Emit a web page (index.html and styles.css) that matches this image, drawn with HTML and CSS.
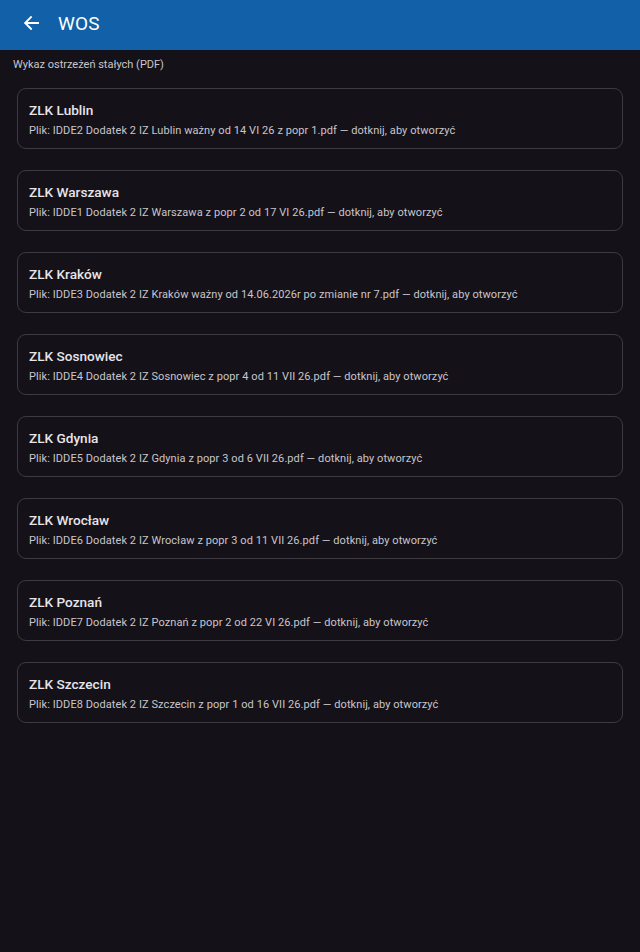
FILE: index.html
```html
<!DOCTYPE html>
<html lang="pl">
<head>
<meta charset="utf-8">
<title>WOS</title>
<link rel="stylesheet" href="styles.css">
</head>
<body>
<header class="appbar">
  <span class="back" aria-label="Wstecz">
    <svg width="16" height="16" viewBox="0 0 16 16"><path d="M15 8H2.5M8 2.2L2.2 8 8 13.8" fill="none" stroke="#fff" stroke-width="1.9" stroke-linecap="square"/></svg>
  </span>
  <h1 class="title">WOS</h1>
</header>
<main class="content">
  <p class="section">Wykaz ostrzeżeń stałych (PDF)</p>
  <ul class="list">
    <li class="card"><div class="name">ZLK Lublin</div><div class="file">Plik: IDDE2 Dodatek 2 IZ Lublin ważny od 14 VI 26 z popr 1.pdf — dotknij, aby otworzyć</div></li>
    <li class="card"><div class="name">ZLK Warszawa</div><div class="file">Plik: IDDE1 Dodatek 2 IZ Warszawa z popr 2 od 17 VI 26.pdf — dotknij, aby otworzyć</div></li>
    <li class="card"><div class="name">ZLK Kraków</div><div class="file">Plik: IDDE3 Dodatek 2 IZ Kraków ważny od 14.06.2026r po zmianie nr 7.pdf — dotknij, aby otworzyć</div></li>
    <li class="card"><div class="name">ZLK Sosnowiec</div><div class="file">Plik: IDDE4 Dodatek 2 IZ Sosnowiec z popr 4 od 11 VII 26.pdf — dotknij, aby otworzyć</div></li>
    <li class="card"><div class="name">ZLK Gdynia</div><div class="file">Plik: IDDE5 Dodatek 2 IZ Gdynia z popr 3 od 6 VII 26.pdf — dotknij, aby otworzyć</div></li>
    <li class="card"><div class="name">ZLK Wrocław</div><div class="file">Plik: IDDE6 Dodatek 2 IZ Wrocław z popr 3 od 11 VII 26.pdf — dotknij, aby otworzyć</div></li>
    <li class="card"><div class="name">ZLK Poznań</div><div class="file">Plik: IDDE7 Dodatek 2 IZ Poznań z popr 2 od 22 VI 26.pdf — dotknij, aby otworzyć</div></li>
    <li class="card"><div class="name">ZLK Szczecin</div><div class="file">Plik: IDDE8 Dodatek 2 IZ Szczecin z popr 1 od 16 VII 26.pdf — dotknij, aby otworzyć</div></li>
  </ul>
</main>
</body>
</html>
```
FILE: styles.css
```css
html, body {
  margin: 0;
  padding: 0;
  background: #141218;
  font-family: Roboto, "Noto Sans", sans-serif;
  height: 100%;
}
.appbar {
  height: 50px;
  background: #1160a8;
  display: flex;
  align-items: center;
  padding-left: 23px;
  padding-bottom: 4px;
  box-sizing: border-box;
}
.back {
  display: flex;
  width: 16px;
  height: 16px;
}
.title {
  margin: 0 0 0 19px;
  font-size: 19px;
  font-weight: 400;
  color: #ffffff;
  letter-spacing: 0.1px;
}
.content {
  padding: 0 17px 0 17px;
}
.section {
  margin: 0 0 0 -4px;
  padding-top: 8px;
  font-size: 11px;
  line-height: 14px;
  color: #c9c5cc;
  height: 38px;
  box-sizing: border-box;
}
.list {
  list-style: none;
  margin: 0;
  padding: 0;
  display: flex;
  flex-direction: column;
  gap: 21px;
}
.card {
  border: 1px solid #3d3a42;
  border-radius: 9px;
  height: 61px;
  box-sizing: border-box;
  padding: 11px 11px 0 11px;
  background: #141218;
}
.name {
  font-size: 13.6px;
  font-weight: 500;
  line-height: 20px;
  color: #e8e4ea;
}
.file {
  font-size: 11px;
  line-height: 16px;
  margin-top: 3px;
  color: #c9c5cc;
  letter-spacing: 0.08px;
}
```
